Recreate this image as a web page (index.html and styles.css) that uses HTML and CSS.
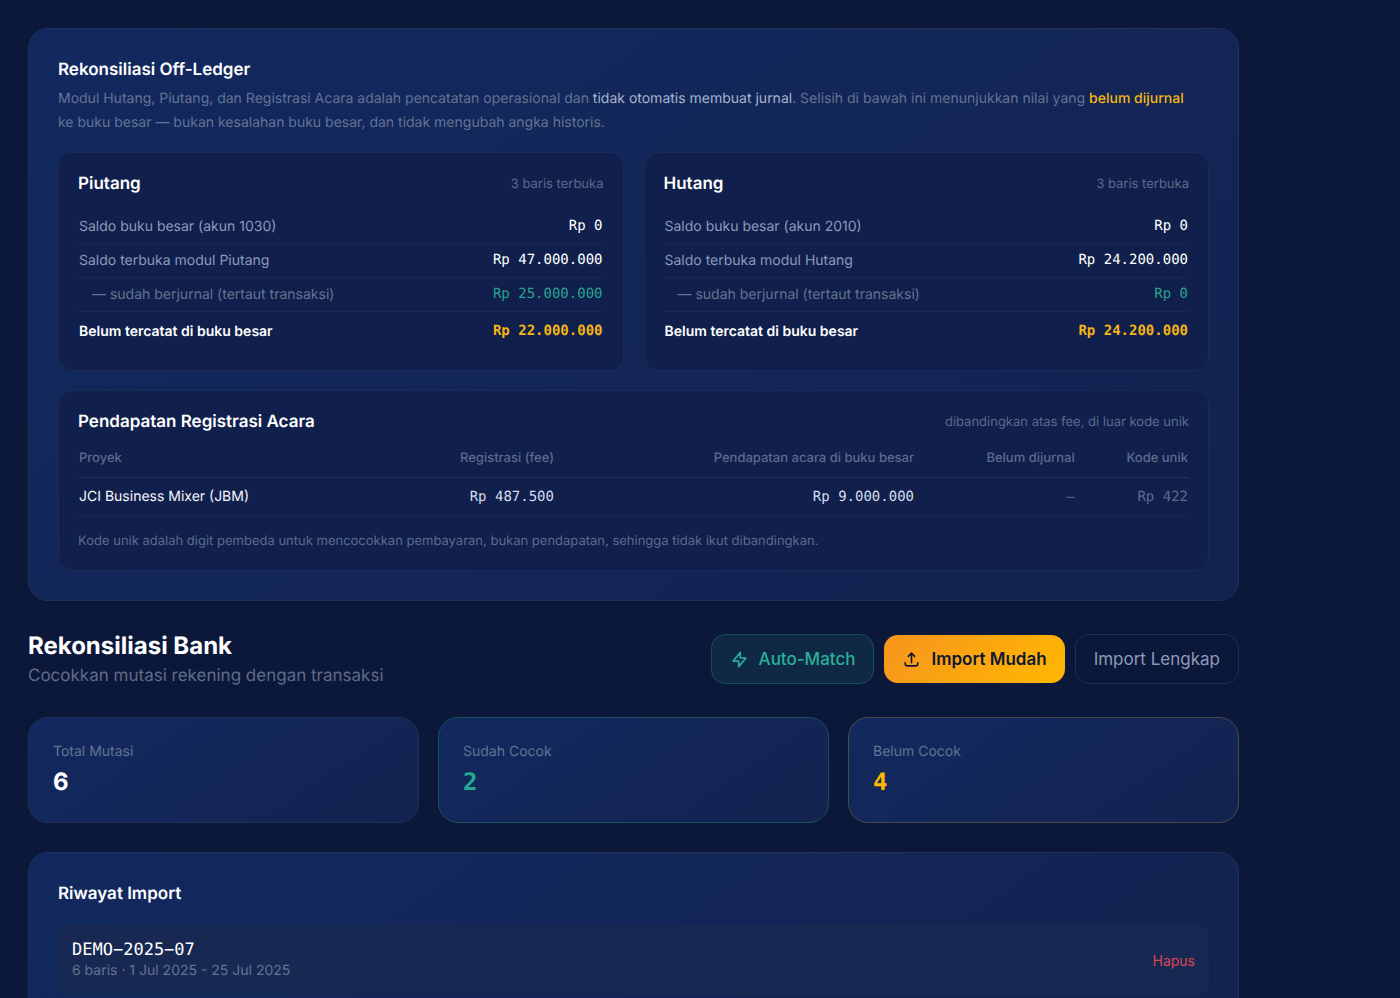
FILE: index.html
```html
<!DOCTYPE html>
<html lang="id">
<head>
  <title>Rekonsiliasi Bank</title>
  <meta charset="UTF-8">
  <meta name="viewport" content="width=device-width, initial-scale=1">
  <link rel="stylesheet" href="styles.css">
</head>
<body>
<main class="page">
  <section class="card">
    <h2 class="card-title">Rekonsiliasi Off-Ledger</h2>
    <p class="intro">Modul Hutang, Piutang, dan Registrasi Acara adalah pencatatan operasional dan <strong>tidak otomatis membuat jurnal</strong>. Selisih di bawah ini menunjukkan nilai yang <strong class="warn">belum dijurnal</strong> ke buku besar — bukan kesalahan buku besar, dan tidak mengubah angka historis.</p>

    <div class="ledgers">
      <div class="panel">
        <div class="panel-head">
          <h3>Piutang</h3>
          <span>3 baris terbuka</span>
        </div>
        <table class="ledger">
          <tr><th scope="row">Saldo buku besar (akun 1030)</th><td>Rp 0</td></tr>
          <tr><th scope="row">Saldo terbuka modul Piutang</th><td>Rp 47.000.000</td></tr>
          <tr class="posted"><th scope="row">— sudah berjurnal (tertaut transaksi)</th><td>Rp 25.000.000</td></tr>
          <tr class="total"><th scope="row">Belum tercatat di buku besar</th><td>Rp 22.000.000</td></tr>
        </table>
      </div>
      <div class="panel">
        <div class="panel-head">
          <h3>Hutang</h3>
          <span>3 baris terbuka</span>
        </div>
        <table class="ledger">
          <tr><th scope="row">Saldo buku besar (akun 2010)</th><td>Rp 0</td></tr>
          <tr><th scope="row">Saldo terbuka modul Hutang</th><td>Rp 24.200.000</td></tr>
          <tr class="posted"><th scope="row">— sudah berjurnal (tertaut transaksi)</th><td>Rp 0</td></tr>
          <tr class="total"><th scope="row">Belum tercatat di buku besar</th><td>Rp 24.200.000</td></tr>
        </table>
      </div>
    </div>

    <div class="panel">
      <div class="panel-head">
        <h3>Pendapatan Registrasi Acara</h3>
        <span>dibandingkan atas fee, di luar kode unik</span>
      </div>
      <table class="events">
        <thead>
          <tr>
            <th>Proyek</th>
            <th>Registrasi (fee)</th>
            <th>Pendapatan acara di buku besar</th>
            <th>Belum dijurnal</th>
            <th>Kode unik</th>
          </tr>
        </thead>
        <tbody>
          <tr>
            <td>JCI Business Mixer (JBM)</td>
            <td>Rp 487.500</td>
            <td>Rp 9.000.000</td>
            <td class="muted">—</td>
            <td class="muted">Rp 422</td>
          </tr>
        </tbody>
      </table>
      <p class="note">Kode unik adalah digit pembeda untuk mencocokkan pembayaran, bukan pendapatan, sehingga tidak ikut dibandingkan.</p>
    </div>
  </section>

  <header class="bank">
    <div>
      <h1>Rekonsiliasi Bank</h1>
      <p>Cocokkan mutasi rekening dengan transaksi</p>
    </div>
    <div class="actions">
      <button type="button" class="btn btn-match">
        <svg width="19" height="19" viewBox="0 0 24 24" fill="none" stroke="currentColor" stroke-width="2" stroke-linecap="round" stroke-linejoin="round" aria-hidden="true"><path d="M13 10V3L4 14h7v7l9-11h-7z"/></svg>
        Auto-Match
      </button>
      <button type="button" class="btn btn-import">
        <svg width="19" height="19" viewBox="0 0 24 24" fill="none" stroke="currentColor" stroke-width="2" stroke-linecap="round" stroke-linejoin="round" aria-hidden="true"><path d="M4 16v1a3 3 0 0 0 3 3h10a3 3 0 0 0 3-3v-1M16 8l-4-4-4 4M12 4v12"/></svg>
        Import Mudah
      </button>
      <button type="button" class="btn btn-full">Import Lengkap</button>
    </div>
  </header>

  <div class="stats">
    <div class="stat">
      <p>Total Mutasi</p>
      <strong>6</strong>
    </div>
    <div class="stat stat-matched">
      <p>Sudah Cocok</p>
      <strong>2</strong>
    </div>
    <div class="stat stat-open">
      <p>Belum Cocok</p>
      <strong>4</strong>
    </div>
  </div>

  <section class="card">
    <h2 class="card-title">Riwayat Import</h2>
    <div class="import">
      <div>
        <p class="import-name">DEMO−2025−07</p>
        <p class="import-info">6 baris · 1 Jul 2025 - 25 Jul 2025</p>
      </div>
      <button type="button" class="delete">Hapus</button>
    </div>
  </section>
</main>
</body>
</html>
```
FILE: styles.css
```css
* {
  box-sizing: border-box;
}

html {
  background: #0c183a;
}

body {
  margin: 0;
  font-family: Inter, "Liberation Sans", sans-serif;
  text-rendering: geometricPrecision;
  color: #fff;
}

h1, h2, h3, p {
  margin: 0;
}

button {
  font-family: inherit;
  cursor: pointer;
}

.page {
  display: flex;
  flex-direction: column;
  max-width: 1267px;
  padding: 28px;
}

.card {
  padding: 29px;
  border: 1px solid #203058;
  border-radius: 20px;
  background: linear-gradient(145deg, #12295f, #132350);
}

.card-title {
  font-size: 17px;
  line-height: 24px;
  font-weight: 600;
}

.intro {
  margin: 5px 0 17px;
  padding-right: 8px;
  font-size: 14px;
  line-height: 24px;
  color: #647392;
}

.intro strong {
  font-weight: 400;
  color: #a8b4cd;
}

.intro .warn {
  font-weight: 500;
  color: #f5b516;
}

.ledgers {
  display: grid;
  grid-template-columns: 1fr 1fr;
  gap: 20px;
  margin-bottom: 19px;
}

.panel {
  padding: 19px;
  border: 1px solid #1b2b57;
  border-radius: 14px;
  background: #101f4b;
}

.panel-head {
  display: flex;
  align-items: center;
  justify-content: space-between;
  line-height: 24px;
}

.panel-head h3 {
  font-size: 17px;
  font-weight: 600;
}

.panel-head span {
  font-size: 13px;
  color: #5d6b8c;
}

table {
  width: 100%;
  border-collapse: collapse;
}

.ledger {
  margin: 14px 0 3px;
  font-size: 14px;
  line-height: 21px;
}

.ledger th {
  padding: 6px 1px;
  border-bottom: 1px solid #1a2954;
  font-weight: 400;
  text-align: left;
  color: #8c9abb;
}

.ledger td {
  padding: 6px 1px;
  border-bottom: 1px solid #1a2954;
  font-family: "DejaVu Sans Mono", monospace;
  text-align: right;
}

.ledger .posted th {
  padding-left: 14px;
  color: #647392;
}

.ledger .posted td {
  color: #28a193;
}

.ledger .total th,
.ledger .total td {
  padding-top: 9px;
  border-bottom: 0;
  font-weight: 600;
  color: #fff;
}

.ledger .total td {
  font-weight: 700;
  color: #f5b516;
}

.events {
  margin-top: 10px;
  line-height: 20px;
}

.events th {
  padding: 4px 1px 9px;
  border-bottom: 1px solid #223259;
  font-size: 13px;
  font-weight: 500;
  text-align: right;
  color: #5d6b8c;
}

.events td {
  padding: 9px 1px;
  border-bottom: 1px solid #1a2954;
  font-family: "DejaVu Sans Mono", monospace;
  font-size: 14px;
  text-align: right;
  color: #d5dced;
}

.events th:first-child,
.events td:first-child {
  font-family: inherit;
  text-align: left;
}

.events td:first-child {
  color: #f4f6fb;
}

.events .muted {
  color: #5d6b8c;
}

.note {
  margin-top: 14px;
  font-size: 13px;
  line-height: 20px;
  color: #5d6b8c;
}

.bank {
  display: flex;
  align-items: center;
  justify-content: space-between;
  margin: 28px 0;
}

.bank h1 {
  font-size: 24px;
  line-height: 34px;
  font-weight: 700;
}

.bank p {
  font-size: 17px;
  line-height: 26px;
  color: #5f6b88;
}

.actions {
  display: flex;
  align-items: center;
  gap: 10px;
}

.btn {
  display: flex;
  align-items: center;
  gap: 10px;
  padding: 12px 18px;
  border: 1px solid #223050;
  border-radius: 14px;
  background: none;
  font-size: 17px;
  line-height: 24px;
  font-weight: 500;
}

.btn-match {
  border-color: #164f5c;
  background: #0f2944;
  color: #2ab09a;
}

.btn-import {
  border: 0;
  background: linear-gradient(135deg, #f7941e, #ffb800);
  font-weight: 600;
  color: #0d1733;
}

.btn-full {
  font-weight: 400;
  color: #8e9ab6;
}

.stats {
  display: grid;
  grid-template-columns: repeat(3, 1fr);
  gap: 19px;
  margin-bottom: 29px;
}

.stat {
  padding: 22px 24px;
  border: 1px solid #203058;
  border-radius: 20px;
  background: linear-gradient(145deg, #12295f, #132350);
}

.stat p {
  font-size: 14px;
  line-height: 24px;
  color: #647392;
}

.stat strong {
  display: block;
  font-size: 24px;
  line-height: 36px;
  font-weight: 700;
}

.stat-matched {
  border-color: #17505f;
}

.stat-matched strong {
  font-family: "DejaVu Sans Mono", monospace;
  color: #22aa94;
}

.stat-open {
  border-color: #4a4a4c;
}

.stat-open strong {
  font-family: "DejaVu Sans Mono", monospace;
  color: #ffb800;
}

.import {
  display: flex;
  align-items: center;
  justify-content: space-between;
  margin-top: 19px;
  padding: 14px;
  border-radius: 12px;
  background: #172853;
}

.import-name {
  font-family: "DejaVu Sans Mono", monospace;
  font-size: 17px;
  line-height: 22px;
}

.import-info {
  font-size: 14px;
  line-height: 20px;
  color: #647392;
}

.delete {
  padding: 0;
  border: 0;
  background: none;
  font-size: 14px;
  color: #dc4650;
}
```
